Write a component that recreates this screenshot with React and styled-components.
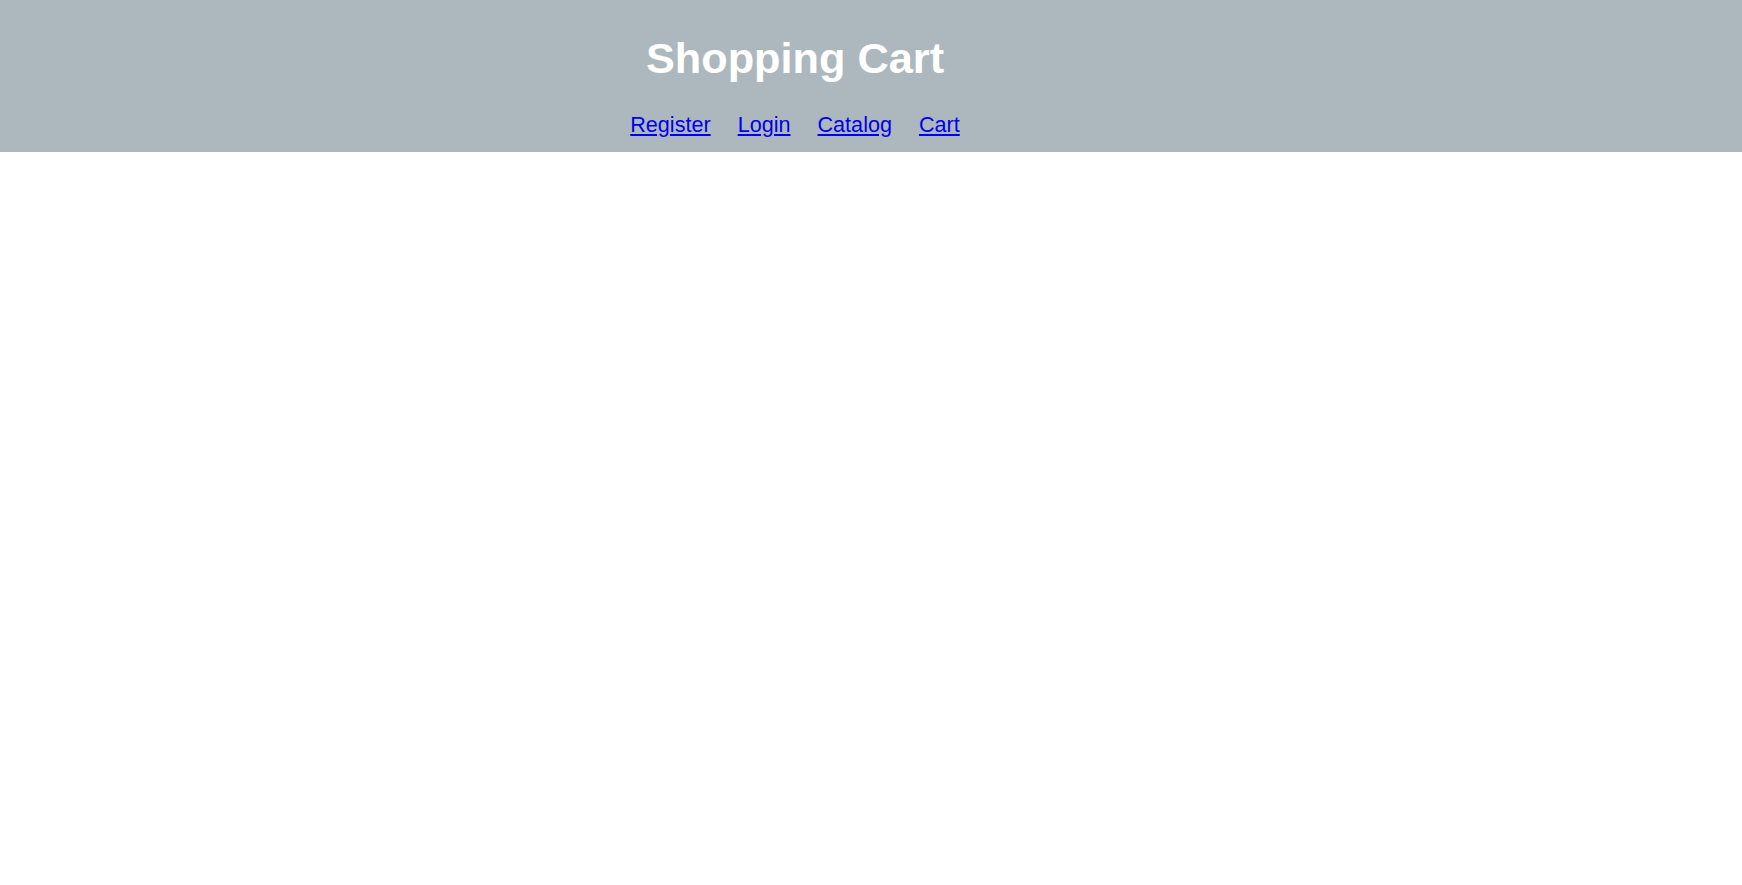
import styled, { createGlobalStyle } from "styled-components";

const GlobalStyle = createGlobalStyle`
  body {
    margin: 0;
    background: #ffffff;
    font-family: "Liberation Sans", Arial, sans-serif;
  }
`;

const Header = styled.header`
  background-color: #acb8bd;
  height: 152px;
  box-sizing: border-box;
  padding-top: 33px;
`;

const Inner = styled.div`
  width: 1590px;
  display: flex;
  flex-direction: column;
  align-items: center;
`;

const Title = styled.h1`
  margin: 0;
  color: #ffffff;
  font-size: 43.3px;
  line-height: 50px;
  font-weight: bold;
`;

const Nav = styled.nav`
  display: flex;
  gap: 27px;
  margin-top: 29px;
`;

const NavLink = styled.a`
  color: #0000ee;
  font-size: 21.6px;
  line-height: 26px;
  text-decoration: underline;
`;

const links = ["Register", "Login", "Catalog", "Cart"];

const App = () => {
  return (
    <>
      <GlobalStyle />
      <Header>
        <Inner>
          <Title>Shopping Cart</Title>
          <Nav>
            {links.map((l) => (
              <NavLink key={l} href="#">
                {l}
              </NavLink>
            ))}
          </Nav>
        </Inner>
      </Header>
    </>
  );
};

export default App;
